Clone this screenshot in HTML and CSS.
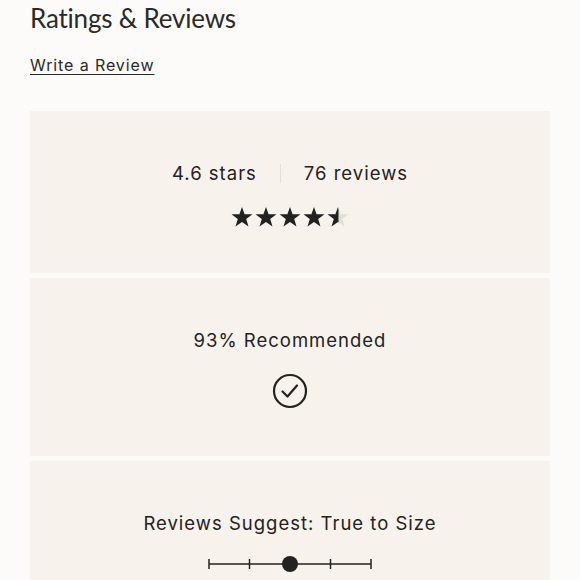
FILE: index.html
```html
<!DOCTYPE html>
<html>
<head>
<meta charset="utf-8">
<link rel="stylesheet" href="styles.css">
</head>
<body>
<div class="page">
  <h2 class="title">Ratings &amp; Reviews</h2>
  <a class="write" href="#">Write a Review</a>
  <div class="cards">
    <section class="card card-rating">
      <div class="summary">
        <span>4.6 stars</span>
        <span class="divider"></span>
        <span>76 reviews</span>
      </div>
      <svg class="stars" width="118" height="22" viewBox="0 0 118 22">
        <defs>
          <path id="st" d="M11 1 L13.6 8.3 L21.5 8.3 L15.2 13 L17.5 20.6 L11 16 L4.5 20.6 L6.8 13 L0.5 8.3 L8.4 8.3 Z"/>
          <clipPath id="half"><rect x="94" y="0" width="13.5" height="22"/></clipPath>
        </defs>
        <use href="#st" x="0" fill="#222"/>
        <use href="#st" x="24" fill="#222"/>
        <use href="#st" x="48" fill="#222"/>
        <use href="#st" x="72" fill="#222"/>
        <use href="#st" x="96" fill="#e2ddd8"/>
        <g clip-path="url(#half)"><use href="#st" x="96" fill="#222"/></g>
      </svg>
    </section>
    <section class="card card-rec">
      <div class="label">93% Recommended</div>
      <svg class="check" width="36" height="36" viewBox="0 0 36 36">
        <circle cx="18" cy="18" r="16" fill="none" stroke="#222" stroke-width="2.2"/>
        <path d="M10.5 18.5 L15.5 23.5 L25 12.5" fill="none" stroke="#222" stroke-width="2.2" stroke-linecap="round" stroke-linejoin="round"/>
      </svg>
    </section>
    <section class="card card-size">
      <div class="label">Reviews Suggest: True to Size</div>
      <svg class="slider" width="166" height="20" viewBox="0 0 166 20">
        <line x1="2" y1="10" x2="164" y2="10" stroke="#222" stroke-width="1.5"/>
        <line x1="2" y1="5" x2="2" y2="15" stroke="#222" stroke-width="1.5"/>
        <line x1="42.5" y1="5" x2="42.5" y2="15" stroke="#222" stroke-width="1.5"/>
        <line x1="123.5" y1="5" x2="123.5" y2="15" stroke="#222" stroke-width="1.5"/>
        <line x1="164" y1="5" x2="164" y2="15" stroke="#222" stroke-width="1.5"/>
        <circle cx="83" cy="10" r="8" fill="#222"/>
      </svg>
    </section>
  </div>
</div>
</body>
</html>
```
FILE: styles.css
```css
html, body {
  margin: 0;
  padding: 0;
  background: #fcfbf9;
}
body {
  font-family: "Inter", "Liberation Sans", sans-serif;
  color: #222;
}
.page {
  padding: 0 30px;
}
.title {
  margin: 0;
  padding-top: 2px;
  font-family: "Lato", sans-serif;
  font-weight: 400;
  font-size: 26px;
  line-height: 32px;
  color: #2a2a2a;
  letter-spacing: -0.2px;
}
.write {
  display: inline-block;
  margin-top: 21px;
  font-size: 16px;
  line-height: 20px;
  letter-spacing: 0.9px;
  color: #2a2a2a;
  text-decoration: underline;
  text-underline-offset: 3px;
}
.cards {
  margin-top: 36px;
  display: flex;
  flex-direction: column;
  gap: 5px;
}
.card {
  background: #f8f2ec;
  display: flex;
  flex-direction: column;
  align-items: center;
}
.card-rating {
  height: 162px;
  padding-top: 50px;
  box-sizing: border-box;
}
.summary {
  display: flex;
  align-items: center;
  font-size: 18.5px;
  line-height: 24px;
  letter-spacing: 1px;
  gap: 23px;
}
.divider {
  width: 1px;
  height: 19px;
  background: #e6ddd4;
}
.stars {
  margin-top: 21px;
}
.card-rec {
  height: 178px;
  padding-top: 50px;
  box-sizing: border-box;
}
.label {
  font-size: 18.5px;
  line-height: 24px;
  letter-spacing: 1px;
}
.check {
  margin-top: 21px;
}
.card-size {
  height: 140px;
  padding-top: 50px;
  box-sizing: border-box;
}
.slider {
  margin-top: 19px;
}
```
